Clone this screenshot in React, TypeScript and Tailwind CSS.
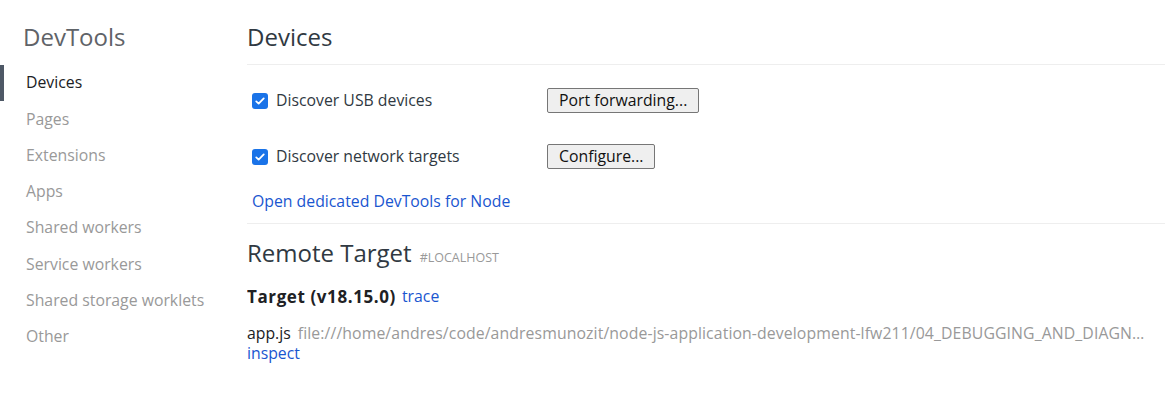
const navItems = [
  "Devices",
  "Pages",
  "Extensions",
  "Apps",
  "Shared workers",
  "Service workers",
  "Shared storage worklets",
  "Other",
];

const Checkbox = () => (
  <span className="flex h-[16px] w-[16px] items-center justify-center rounded-[3px] bg-[#1a73e8]">
    <svg viewBox="0 0 16 16" className="h-[12px] w-[12px]">
      <path d="M3 8.5l3.2 3L13 4.5" fill="none" stroke="white" strokeWidth="2.4" strokeLinecap="round" strokeLinejoin="round" />
    </svg>
  </span>
);

const Button = ({ label }: { label: string }) => (
  <button className="h-[25px] rounded-[2px] border border-[#767676] bg-[#efefef] px-[11px] text-[15.8px] leading-none text-[#111]">
    {label}
  </button>
);

export default function App() {
  return (
    <div className="flex h-[410px] w-[1165px] bg-white font-['Open_Sans',sans-serif] text-[15.8px] text-[#303942]">
      <aside className="w-[247px] shrink-0">
        <h1 className="ml-[23px] mt-[21px] h-[32px] text-[24px] leading-[32px] text-[#5f6368]">DevTools</h1>
        <nav className="mt-[12px] flex flex-col">
          {navItems.map((item, i) => (
            <div
              key={item}
              className={`flex h-[36.3px] items-center border-l-[4px] pl-[22px] ${
                i === 0 ? "border-[#4e5866] text-[#202124]" : "border-transparent text-[#999]"
              }`}
            >
              {item}
            </div>
          ))}
        </nav>
      </aside>

      <main className="flex-1 overflow-hidden">
        <h2 className="mt-[21px] h-[32px] text-[24px] leading-[32px] text-[#303942]">Devices</h2>
        <div className="mt-[11px] border-t border-[#eee]" />

        <div className="ml-[5px] mt-[23px] flex h-[25px] items-center">
          <Checkbox />
          <span className="ml-[8px] w-[271px]">Discover USB devices</span>
          <Button label="Port forwarding..." />
        </div>
        <div className="ml-[5px] mt-[31px] flex h-[25px] items-center">
          <Checkbox />
          <span className="ml-[8px] w-[271px]">Discover network targets</span>
          <Button label="Configure..." />
        </div>
        <div className="ml-[5px] mt-[22px] h-[20px] leading-[20px] text-[#1a56d0]">Open dedicated DevTools for Node</div>
        <div className="mt-[12px] border-t border-[#eee]" />

        <div className="mt-[14px] flex items-baseline">
          <span className="text-[24px] leading-[30px] text-[#303942]">Remote Target</span>
          <span className="ml-[8px] text-[12.5px] uppercase text-[#999]">#localhost</span>
        </div>
        <div className="mt-[18px] flex h-[22px] items-center">
          <span className="text-[17px] font-bold tracking-[0.6px] text-[#202124]">Target (v18.15.0)</span>
          <span className="ml-[6px] text-[#1a56d0]">trace</span>
        </div>
        <div className="mt-[15px] flex h-[20px] items-center leading-[20px]">
          <span className="text-[#202124]">app.js</span>
          <span className="ml-[7px] whitespace-nowrap tracking-[0.1px] text-[#999]">
            file:///home/andres/code/andresmunozit/node-js-application-development-lfw211/04_DEBUGGING_AND_DIAGN…
          </span>
        </div>
        <div className="h-[20px] leading-[20px] text-[#1a56d0]">inspect</div>
      </main>
    </div>
  );
}
